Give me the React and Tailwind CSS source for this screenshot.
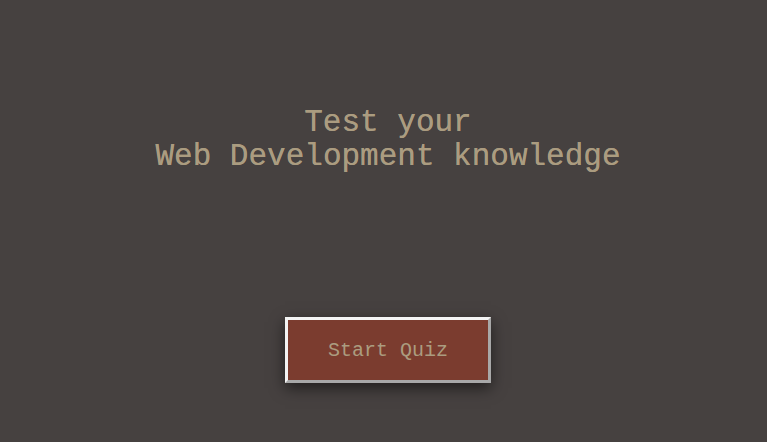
export default function App() {
  return (
    <div
      className="w-full h-[442px] bg-[#464140] flex flex-col items-center pl-[9px]"
      style={{ fontFamily: '"Liberation Mono", monospace' }}
    >
      <h1 className="mt-[106px] text-[31px] leading-[34px] text-center text-[#ab9c80] font-normal [text-shadow:0_0_0.6px_#ab9c80]">
        Test your
        <br />
        Web Development knowledge
      </h1>
      <button className="mt-[143px] w-[206px] h-[66px] pt-[1px] bg-[#7b3c2f] text-[#ab9c80] text-[20px] border-[3px] border-t-[#f4f4f4] border-l-[#f4f4f4] border-r-[#a8a8a8] border-b-[#a8a8a8] shadow-[0_5px_14px_rgba(0,0,0,0.55)]">
        Start Quiz
      </button>
    </div>
  );
}
